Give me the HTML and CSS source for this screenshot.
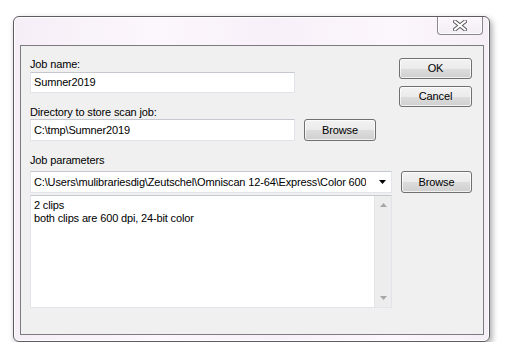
FILE: index.html
```html
<!DOCTYPE html>
<html>
<head>
    <title>Scan Job</title>
    <link rel="stylesheet" href="styles.css">
</head>
<body>
    <div class="window">
        <div class="titlebar">
            <div class="close-btn">
                <svg width="14" height="11" viewBox="0 0 14 11">
                    <path d="M2 1.5 L12 9.5 M12 1.5 L2 9.5" stroke="#5a5a5a" stroke-width="4" stroke-linecap="square" fill="none"/>
                    <path d="M2 1.5 L12 9.5 M12 1.5 L2 9.5" stroke="#ffffff" stroke-width="2" stroke-linecap="square" fill="none"/>
                </svg>
            </div>
        </div>

        <div class="client">
            <div class="top-section">
                <div class="fields">
                    <div class="label">Job name:</div>
                    <div class="input job-name">Sumner2019</div>

                    <div class="label dir-label">Directory to store scan job:</div>
                    <div class="input-row">
                        <div class="input dir-input">C:\tmp\Sumner2019</div>
                        <div class="button">Browse</div>
                    </div>
                </div>
                <div class="actions">
                    <div class="button wide">OK</div>
                    <div class="button wide">Cancel</div>
                </div>
            </div>

            <div class="label params-label">Job parameters</div>
            <div class="combo-row">
                <div class="combo">
                    <span>C:\Users\mulibrariesdig\Zeutschel\Omniscan 12-64\Express\Color 600</span>
                    <svg class="combo-arrow" width="7" height="4" viewBox="0 0 7 4">
                        <path d="M0 0 H7 L3.5 4 Z" fill="#000"/>
                    </svg>
                </div>
                <div class="button">Browse</div>
            </div>

            <div class="memo">
                <div class="memo-text">
                    2 clips<br>
                    both clips are 600 dpi, 24-bit color
                </div>
                <div class="scrollbar">
                    <svg width="7" height="4" viewBox="0 0 7 4"><path d="M0 4 H7 L3.5 0 Z" fill="#a7a7a7"/></svg>
                    <svg width="7" height="4" viewBox="0 0 7 4"><path d="M0 0 H7 L3.5 4 Z" fill="#a7a7a7"/></svg>
                </div>
            </div>
        </div>
    </div>
</body>
</html>
```

FILE: styles.css
```css
* {
    margin: 0;
    padding: 0;
    box-sizing: border-box;
}

body {
    background: #ffffff;
    font-family: "Liberation Sans", Arial, sans-serif;
    font-size: 11px;
    letter-spacing: -0.15px;
    color: #000;
}

/* Window frame (Win7 basic look) */
.window {
    margin: 16px 0 0 13px;
    width: 477px;
    height: 326px;
    border: 1px solid #5f5a62;
    border-radius: 6px;
    background: linear-gradient(90deg, #f6eef7 0%, #fcf7fc 30%, #f8f0f9 55%, #fcf7fc 80%, #f5eef6 100%);
    box-shadow: inset 0 0 0 1px rgba(255,255,255,0.9), 2px 3px 6px rgba(0,0,0,0.35);
    padding: 0 5px 6px 6px;
    display: flex;
    flex-direction: column;
}

.titlebar {
    height: 28px;
    display: flex;
    justify-content: flex-end;
    align-items: flex-start;
}

.close-btn {
    width: 46px;
    height: 18px;
    margin-right: 1px;
    border: 1px solid #8a8590;
    border-top: none;
    border-radius: 0 0 4px 4px;
    background: linear-gradient(#fcf8fc, #f3edf4);
    box-shadow: inset 0 0 0 1px rgba(255,255,255,0.8);
    display: flex;
    align-items: center;
    justify-content: center;
}

.client {
    flex: 1;
    border: 1px solid #7d7a80;
    background: #f0f0f0;
    padding: 12px 11px 0 9px;
}

.top-section {
    display: flex;
    justify-content: space-between;
}

.label {
    height: 13px;
    line-height: 13px;
}

.input {
    height: 21px;
    line-height: 19px;
    padding-left: 3px;
    background: #fff;
    border: 1px solid #e1e5ea;
    border-top-color: #c5c9cf;
}

.job-name {
    width: 265px;
    margin-top: 1px;
}

.dir-label {
    margin-top: 13px;
}

.input-row {
    display: flex;
    gap: 9px;
    align-items: center;
}

.dir-input {
    width: 265px;
    height: 22px;
    line-height: 20px;
}

.button {
    width: 72px;
    height: 22px;
    line-height: 20px;
    text-align: center;
    border: 1px solid #707070;
    border-radius: 3px;
    background: linear-gradient(#f2f2f2 0%, #ebebeb 50%, #dddddd 51%, #cfcfcf 100%);
    box-shadow: inset 0 0 0 1px rgba(255,255,255,0.7);
}

.actions {
    display: flex;
    flex-direction: column;
    gap: 7px;
}

.button.wide {
    width: 73px;
    height: 21px;
    line-height: 19px;
}

.params-label {
    margin-top: 13px;
}

.combo-row {
    display: flex;
    gap: 9px;
    align-items: center;
    margin-top: 4px;
}

.combo {
    width: 362px;
    height: 22px;
    background: #fff;
    border: 1px solid #e1e5ea;
    border-top-color: #c5c9cf;
    display: flex;
    align-items: center;
    justify-content: space-between;
    padding: 0 5px 0 3px;
    white-space: nowrap;
}

.combo span {
    overflow: hidden;
}

.combo-arrow {
    flex: none;
}

.combo-row .button {
    width: 71px;
}

.memo {
    margin-top: 2px;
    width: 362px;
    height: 113px;
    background: #fff;
    border: 1px solid #e1e5ea;
    border-top-color: #c5c9cf;
    display: flex;
}

.memo-text {
    flex: 1;
    padding: 3px 3px;
    line-height: 13px;
}

.scrollbar {
    width: 17px;
    background: #ededed;
    border-left: 1px solid #e4e4e4;
    display: flex;
    flex-direction: column;
    justify-content: space-between;
    align-items: center;
    padding: 7px 0;
}
```
